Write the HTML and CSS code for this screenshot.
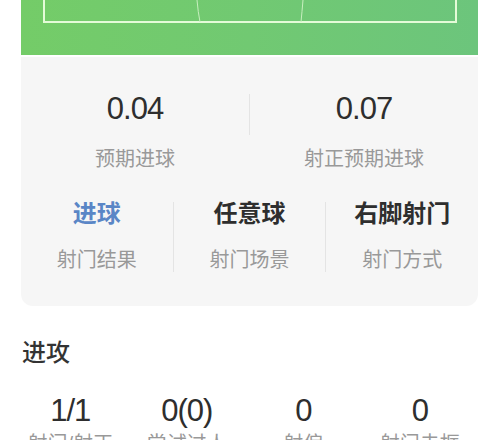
FILE: index.html
```html
<!DOCTYPE html>
<html lang="zh-CN">
<head>
    <meta charset="UTF-8">
    <meta name="viewport" content="width=device-width, initial-scale=1.0">
    <title>射门详情</title>
    <link rel="stylesheet" href="styles.css">
</head>
<body>
    <!-- 球场底部 -->
    <div class="pitch">
        <svg class="pitch-lines" width="457" height="55" viewBox="0 0 457 55">
            <path d="M23 0 V22 H435 V0" fill="none" stroke="#e4fbd8" stroke-width="2"/>
            <path d="M176 0 Q177 12 179 22" fill="none" stroke="#c8efbf" stroke-width="1"/>
            <path d="M282 0 Q281 12 280 22" fill="none" stroke="#c8efbf" stroke-width="1"/>
        </svg>
    </div>

    <div class="card">
        <div class="row row-xg">
            <div class="cell">
                <div class="value">0.04</div>
                <div class="label">预期进球</div>
            </div>
            <div class="cell">
                <div class="value">0.07</div>
                <div class="label">射正预期进球</div>
            </div>
        </div>
        <div class="row row-info">
            <div class="cell">
                <div class="title goal">进球</div>
                <div class="label">射门结果</div>
            </div>
            <div class="cell">
                <div class="title">任意球</div>
                <div class="label">射门场景</div>
            </div>
            <div class="cell">
                <div class="title">右脚射门</div>
                <div class="label">射门方式</div>
            </div>
        </div>
    </div>

    <h2 class="section-title">进攻</h2>
    <div class="stats">
        <div class="stat">
            <div class="value">1/1</div>
            <div class="label">射门/射正</div>
        </div>
        <div class="stat">
            <div class="value">0(0)</div>
            <div class="label">尝试过人</div>
        </div>
        <div class="stat">
            <div class="value">0</div>
            <div class="label">射偏</div>
        </div>
        <div class="stat">
            <div class="value">0</div>
            <div class="label">射门击框</div>
        </div>
    </div>
</body>
</html>
```

FILE: styles.css
```css
/* 基础样式 */
body {
    margin: 0;
    background: #fff;
    font-family: 'Liberation Sans', 'Noto Sans CJK SC', sans-serif;
    color: #333;
}

/* 绿色球场 */
.pitch {
    margin: 0 22px 0 21px;
    height: 55px;
    background: linear-gradient(90deg, #74cc68, #71c972 50%, #6cc57c);
}

.pitch-lines {
    display: block;
}

/* 信息卡片 */
.card {
    margin: 2px 22px 0 21px;
    padding: 34px 0 33px;
    background: #f6f6f6;
    border-radius: 0 0 12px 12px;
}

.row {
    display: flex;
}

.cell {
    flex: 1;
    text-align: center;
}

.row-xg {
    margin-bottom: 27px;
}

/* 竖向分隔线 */
.row-xg .cell + .cell {
    border-left: 1px solid transparent;
    border-image: linear-gradient(to bottom, transparent 4px, #e4e4e4 4px, #e4e4e4 44px, transparent 44px) 1;
}

.row-info .cell + .cell {
    border-left: 1px solid transparent;
    border-image: linear-gradient(to bottom, transparent 4px, #e4e4e4 4px, #e4e4e4 72px, transparent 72px) 1;
}

.value {
    font-size: 31px;
    line-height: 36px;
    font-weight: 300;
    color: #2e2e2e;
    letter-spacing: -1px;
}

.label {
    font-size: 20px;
    line-height: 26px;
    color: #999;
}

.row-xg .label {
    margin-top: 19px;
}

.title {
    font-size: 24px;
    line-height: 30px;
    font-weight: bold;
    color: #2e2e2e;
    margin-bottom: 18px;
}

.title.goal {
    color: #5a86c6;
}

/* 进攻数据 */
.section-title {
    margin: 32px 0 0 22px;
    font-size: 24px;
    line-height: 30px;
    font-weight: 500;
    color: #333;
}

.stats {
    display: flex;
    margin: 25px 22px 0 12px;
}

.stat {
    flex: 1;
    text-align: center;
}

.stat .label {
    margin-top: 2px;
}
```
